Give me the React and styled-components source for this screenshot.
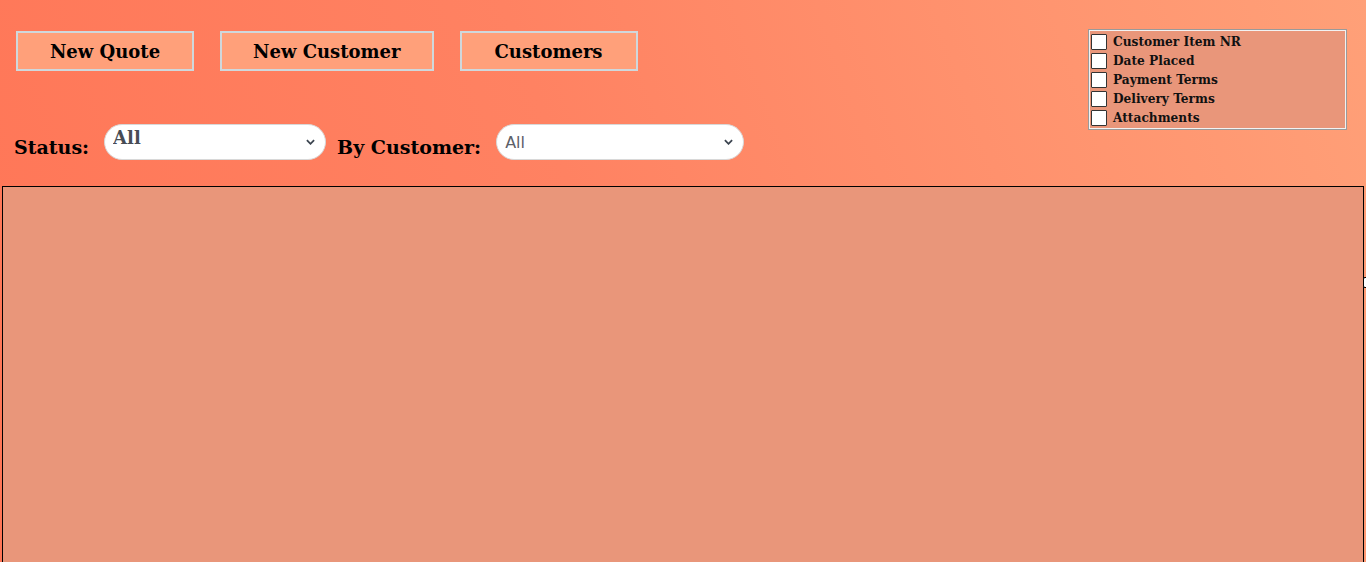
import React from 'react';
import styled, { createGlobalStyle } from 'styled-components';

const columns = [
  'Customer Item NR',
  'Date Placed',
  'Payment Terms',
  'Delivery Terms',
  'Attachments',
];

const GlobalStyle = createGlobalStyle`
  html, body {
    margin: 0;
    padding: 0;
    height: 100%;
  }
  body {
    font-family: 'DejaVu Serif', 'Liberation Serif', serif;
    background: linear-gradient(70deg, #ff7556 0%, #ff8262 45%, #ffa078 100%);
    overflow: hidden;
  }
`;

const App = () => {
  return (
    <Page>
      <GlobalStyle />
      <Header>
        <Controls>
          <ButtonRow>
            <ActionButton>New Quote</ActionButton>
            <ActionButton>New Customer</ActionButton>
            <ActionButton>Customers</ActionButton>
          </ButtonRow>
          <FilterRow>
            <FilterLabel>Status:</FilterLabel>
            <SelectWrap width="222px">
              <Select serif defaultValue="All">
                <option>All</option>
              </Select>
              <Chevron viewBox="0 0 10 6">
                <path d="M1 1l4 4 4-4" />
              </Chevron>
            </SelectWrap>
            <FilterLabel second>By Customer:</FilterLabel>
            <SelectWrap width="248px">
              <Select defaultValue="All">
                <option>All</option>
              </Select>
              <Chevron viewBox="0 0 10 6">
                <path d="M1 1l4 4 4-4" />
              </Chevron>
            </SelectWrap>
          </FilterRow>
        </Controls>
        <ColumnPanel>
          {columns.map((col) => (
            <ColumnRow key={col}>
              <Box type="checkbox" />
              <ColumnLabel>{col}</ColumnLabel>
            </ColumnRow>
          ))}
        </ColumnPanel>
      </Header>
      <Board>
        <Handle />
      </Board>
    </Page>
  );
};

const Page = styled.div`
  min-height: 100vh;
  display: flex;
  flex-direction: column;
`;

const Header = styled.header`
  display: flex;
  justify-content: space-between;
  align-items: flex-start;
  height: 186px;
`;

const Controls = styled.div`
  display: flex;
  flex-direction: column;
`;

const ButtonRow = styled.div`
  display: flex;
  gap: 27px;
  margin: 31px 0 0 16px;
`;

const ActionButton = styled.button`
  height: 40px;
  min-width: 178px;
  padding: 0 31px;
  box-sizing: border-box;
  background: #ffa07a;
  border: 2px solid #cfd8dc;
  font-family: 'DejaVu Serif', serif;
  font-weight: bold;
  font-size: 18px;
  color: #000;
  & + & {
    margin-left: -1px;
  }
`;

const FilterRow = styled.div`
  display: flex;
  align-items: center;
  margin: 53px 0 0 14px;
`;

const FilterLabel = styled.span`
  font-weight: bold;
  font-size: 19px;
  color: #000;
  margin-top: 10px;
  margin-right: 15px;
  margin-left: ${(p) => (p.second ? '11px' : '0')};
`;

const SelectWrap = styled.div`
  position: relative;
  width: ${(p) => p.width};
  height: 36px;
`;

const Select = styled.select`
  appearance: none;
  width: 100%;
  height: 100%;
  box-sizing: border-box;
  border: 1px solid #d8d8d8;
  border-radius: 18px;
  background: #fff;
  color: ${(p) => (p.serif ? '#474c55' : '#5d6068')};
  padding: ${(p) => (p.serif ? '0 0 10px 8px' : '0 0 0 8px')};
  font-family: ${(p) => (p.serif ? "'DejaVu Serif', serif" : "'DejaVu Sans', sans-serif")};
  font-weight: ${(p) => (p.serif ? 'bold' : 'normal')};
  font-size: ${(p) => (p.serif ? '18px' : '16px')};
`;

const Chevron = styled.svg`
  position: absolute;
  right: 11px;
  top: 15px;
  width: 9px;
  height: 6px;
  fill: none;
  stroke: #3c4550;
  stroke-width: 2;
  pointer-events: none;
`;

const ColumnPanel = styled.div`
  margin: 30px 20px 0 0;
  width: 257px;
  box-sizing: border-box;
  background: #e9967a;
  border: 1px solid #f2f2f2;
  outline: 1px solid #9a9a9a;
  padding: 1px;
  display: flex;
  flex-direction: column;
`;

const ColumnRow = styled.label`
  display: flex;
  align-items: center;
  height: 19px;
`;

const Box = styled.input`
  appearance: none;
  width: 16px;
  height: 16px;
  margin: 0 6px 0 0;
  background: #fff;
  border: 1px solid #333;
  border-radius: 1px;
`;

const ColumnLabel = styled.span`
  font-weight: bold;
  font-size: 12.2px;
  color: #111;
`;

const Board = styled.main`
  position: relative;
  flex: 1;
  margin: 0 2px;
  background: #e9967a;
  border: 1px solid #000;
  border-bottom: none;
`;

const Handle = styled.div`
  position: absolute;
  right: -6px;
  top: 90px;
  width: 4px;
  height: 9px;
  background: #fff;
  border: 1px solid #000;
  border-radius: 2px;
`;

export default App;
